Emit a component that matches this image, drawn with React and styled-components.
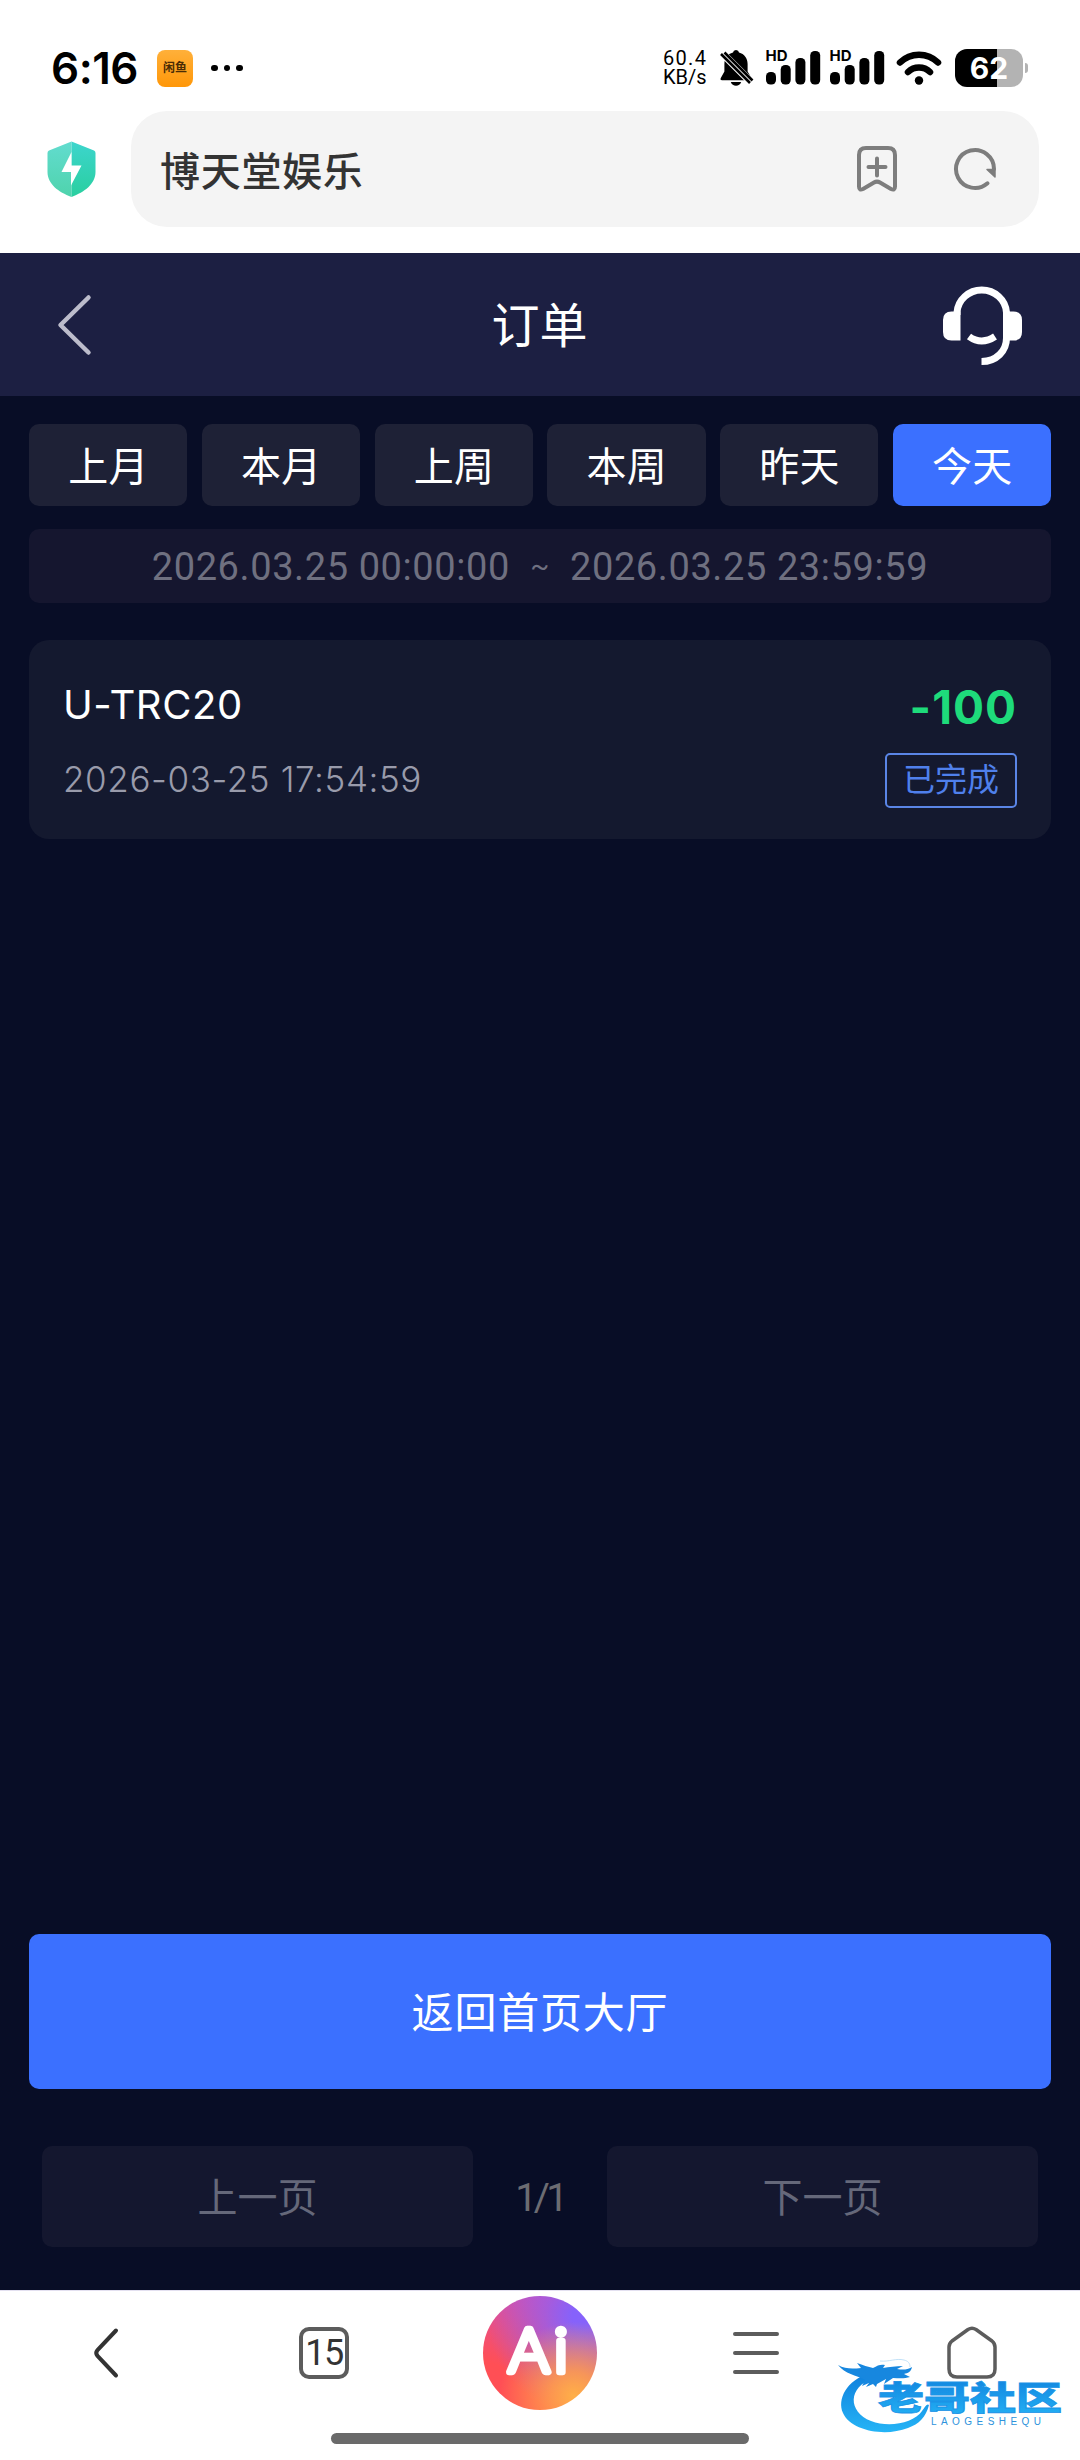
import React, { useState } from 'react';
import styled, { createGlobalStyle } from 'styled-components';

const latin = `Inter, "Noto Sans CJK SC", sans-serif`;
const plain = `Roboto, "Noto Sans CJK SC", sans-serif`;

const tabs = ['上月', '本月', '上周', '本周', '昨天', '今天'];

const orders = [
  { id: 1, name: 'U-TRC20', time: '2026-03-25 17:54:59', amount: '-100', status: '已完成' },
];

function BellOffIcon() {
  return <svg width="34" height="38" viewBox="0 0 34 38">
    <path d="M17 1a3 3 0 0 1 3 2.6c5.400 1.400 8.600 5.800 8.600 11.400v7.500l3.800 6.500c.6 1.300 0 2.300-1.300 2.300H3c-1.300 0-1.900-1-1.200-2.300l3.600-6.500V15c0-5.600 3.200-10 8.600-11.400A3 3 0 0 1 17 1z" />
    <path d="M11.800 33h10.400c-.9 2.500-2.800 3.700-5.200 3.700s-4.300-1.200-5.200-3.700z" />
    <path d="M2 3l31 31" stroke="#fff" strokeWidth="7.500" />
    <path d="M2 5l29 29M5.500 3.500l28 28" stroke="#000" strokeWidth="2.600" />
  </svg>;
}

function SignalIcon() {
  return <svg width="56" height="36" viewBox="0 0 56 36">
    <text x="-0.500" y="11" fontFamily="Inter, sans-serif" fontWeight="700" fontSize="14.500" textLength="22" lengthAdjust="spacingAndGlyphs">HD</text>
    <rect x="0" y="22" width="10" height="12.500" rx="4.500" />
    <rect x="14.700" y="15" width="10" height="19.500" rx="4.500" />
    <rect x="29.400" y="8" width="10" height="26.500" rx="4.500" />
    <rect x="44.200" y="1" width="10" height="33.500" rx="4.500" />
  </svg>;
}

function WifiIcon() {
  return <svg width="46" height="36" viewBox="0 0 46 36" fill="none" stroke="#000" strokeWidth="6.500" strokeLinecap="round">
    <path d="M4 12.500a27 27 0 0 1 38 0" />
    <path d="M12 22a16 16 0 0 1 22 0" />
    <circle cx="23" cy="30.500" r="4.200" fill="#000" stroke="none" />
  </svg>;
}

function ShieldIcon() {
  return <svg width="49" height="56" viewBox="0 0 49 56">
    <defs>
      <linearGradient id="shieldL" x1="0" y1="0" x2="0" y2="1">
        <stop offset="0" stopColor="#62dccf" />
        <stop offset="1" stopColor="#4fd3ac" />
      </linearGradient>
      <linearGradient id="shieldR" x1="0" y1="0" x2="0" y2="1">
        <stop offset="0" stopColor="#3dd5cd" />
        <stop offset="1" stopColor="#29cf9f" />
      </linearGradient>
    </defs>
    <path d="M24.500 0.500L2 9.500Q.5 10 .5 12v19c0 12 11 20 24 25z" fill="url(#shieldL)" />
    <path d="M24.500 0.500L47 9.500q1.500.5 1.500 2.500v19c0 12-11 20-24 25z" fill="url(#shieldR)" />
    <path d="M24.500 11L14.500 31h9.500v13.500L34.500 24.500h-10z" fill="#fff" />
  </svg>;
}

function BookmarkIcon() {
  return <svg width="42" height="48" viewBox="0 0 42 48" fill="none" stroke="#7d7d7d" strokeWidth="4" strokeLinecap="round" strokeLinejoin="round">
    <path d="M10 3h22q7 0 7 7v31.500q0 4.500-4 2.500l-11-6.500q-3-1.800-6 0L7 44q-4 2-4-2.500V10q0-7 7-7z" />
    <path d="M21 13.500v17M12.500 22h17" />
  </svg>;
}

function RefreshIcon() {
  return <svg width="44" height="44" viewBox="0 0 44 44" fill="none" stroke="#7d7d7d" strokeWidth="4" strokeLinecap="round">
    <path d="M41 22a19 19 0 1 0-6.500 14.300" />
    <path d="M34 22.500h8v7.500z" fill="#7d7d7d" strokeWidth="1.500" strokeLinejoin="round" />
  </svg>;
}

function ServiceIcon() {
  return <svg width="80" height="80" viewBox="0 0 80 80" fill="none" stroke="#fff" strokeWidth="7">
    <path d="M15 30v-2.500a24.800 24 0 0 1 49.500 0V53c0 13-10 23.500-25 23.500" />
    <path d="M18.500 26.500v29H9.500Q1 55.500 1 47V35q0-8.500 8.500-8.500zM61 26.500h10.500q8.500 0 8.500 8.500v12q0 8.500-8.500 8.500H61z" fill="#fff" stroke="none" />
    <path d="M27 51.500q12.500 9 26 0" />
  </svg>;
}

function WatermarkLogo() {
  return <svg width="230" height="86" viewBox="0 0 230 86">
    <defs>
      <linearGradient id="wave" x1="0" y1="0" x2="0" y2="1">
        <stop offset="0" stopColor="#0f7fdc" />
        <stop offset="1" stopColor="#25b4f6" />
      </linearGradient>
    </defs>
    <path d="M32 16C8 23-1 43 5 56c8 18 42 24 65 15 11-4 18-11 21-23-2-2-4 2-7 6-8 12-33 17-51 10C10 55 9 30 36 21z" fill="url(#wave)" />
    <path d="M0 8c7 4 14 4 23 3l-4-5c6 2 11 4 16 5 5-3 8-4 12-3l-2 3c6-1 13-2 20-2l-6 3c6 1 10 1 15-2-1 5-4 6-8 7l6 3c-6 2-12 1-17 1l-9 6 2-5-9 5-1 3-3-3-7 3 3-4-7 3 3-6C18 18 7 17 0 8z" fill="#1787df" />
    <path d="M42 4c9 1 16-3 24-1 4 1 6 3 6 7" fill="none" stroke="#b4d9f5" strokeWidth=".8" />
    <text x="40" y="53" fontFamily='"Noto Sans CJK SC", sans-serif' fontWeight="900" fontSize="33" textLength="184" lengthAdjust="spacingAndGlyphs" fill="url(#wave)" stroke="#1b93e6" strokeWidth=".8">老哥社区</text>
    <text x="93" y="67.500" fontFamily="Liberation Sans, sans-serif" fontSize="10" textLength="110" fill="#2d93dc">LAOGESHEQU</text>
  </svg>;
}

function App() {
  const [active, setActive] = useState(5);

  return <Page>
    <GlobalStyle />
    <StatusBar>
      <Clock>6:16</Clock>
      <AppBadge>闲鱼</AppBadge>
      <Dots><i /><i /><i /></Dots>
      <StatusRight>
        <NetSpeed><span>60.4</span><span>KB/s</span></NetSpeed>
        <BellOffIcon />
        <Signals><SignalIcon /><SignalIcon /></Signals>
        <WifiIcon />
        <Battery>62</Battery>
        <BatteryTip />
      </StatusRight>
    </StatusBar>

    <AddressRow>
      <ShieldIcon />
      <AddressBox>
        <SiteName>博天堂娱乐</SiteName>
        <BookmarkIcon />
        <RefreshIcon />
      </AddressBox>
    </AddressRow>

    <Header>
      <svg width="36" height="62" viewBox="0 0 36 62" fill="none" stroke="#bcbccb" strokeWidth="4.500" strokeLinecap="round" strokeLinejoin="round">
        <path d="M31.500 3.500L3.500 31l28 27.500" />
      </svg>
      <Title>订单</Title>
      <ServiceIcon />
    </Header>

    <Content>
      <Tabs>
        {tabs.map((tab, index) => (
          <Tab key={tab} $active={index === active} onClick={() => setActive(index)}>{tab}</Tab>
        ))}
      </Tabs>
      <DateRange>
        <span>2026.03.25 00:00:00</span>
        <em>~</em>
        <span>2026.03.25 23:59:59</span>
      </DateRange>

      {orders.map((order) => (
        <OrderCard key={order.id}>
          <OrderLine>
            <OrderName>{order.name}</OrderName>
            <Amount>{order.amount}</Amount>
          </OrderLine>
          <OrderLine>
            <OrderTime>{order.time}</OrderTime>
            <Status>{order.status}</Status>
          </OrderLine>
        </OrderCard>
      ))}

      <HomeButton>返回首页大厅</HomeButton>
      <Pager>
        <PageButton>上一页</PageButton>
        <PageCount>1/1</PageCount>
        <PageButton>下一页</PageButton>
      </Pager>
    </Content>

    <BottomBar>
      <NavItem>
        <svg width="32" height="52" viewBox="0 0 32 52" fill="none" stroke="#333" strokeWidth="4" strokeLinecap="round">
          <path d="M24 3.500L5.500 23q-2.500 3 0 6L24 48.500" />
        </svg>
      </NavItem>
      <NavItem><TabCount>15</TabCount></NavItem>
      <NavItem>
        <AiButton>
          <svg width="114" height="114" viewBox="0 0 114 114">
            <text x="25.500 71" y="75.500" fontFamily="Lato, sans-serif" fontWeight="300" fontSize="62" fill="#fff" stroke="#fff" strokeWidth="6.500" strokeLinejoin="round">Ai</text>
          </svg>
        </AiButton>
      </NavItem>
      <NavItem>
        <svg width="46" height="44" viewBox="0 0 46 44" stroke="#5c5c5c" strokeWidth="4" strokeLinecap="round">
          <path d="M2 3h42M2 22h42M2 41h42" />
        </svg>
      </NavItem>
      <NavItem>
        <svg width="50" height="54" viewBox="0 0 50 54" fill="none" stroke="#5c5c5c" strokeWidth="3.500" strokeLinejoin="round">
          <path d="M21 3.500q4-2.500 8 0L45 15q3 2.500 3 6v22q0 8-8 8H10q-8 0-8-8V21q0-3.500 3-6z" />
        </svg>
      </NavItem>
      <Watermark><WatermarkLogo /></Watermark>
    </BottomBar>
    <GestureArea><GestureBar /></GestureArea>
  </Page>;
}

export default App;

const GlobalStyle = createGlobalStyle`
  * {
    box-sizing: border-box;
  }
  body {
    margin: 0;
    background: #fff;
  }
  svg {
    display: block;
    flex-shrink: 0;
    overflow: visible;
  }
  button {
    border: none;
    padding: 0;
    margin: 0;
    cursor: pointer;
  }
`

const Page = styled.div`
  width: 1080px;
  height: 2460px;
  display: flex;
  flex-direction: column;
  background: #fff;
  font-family: ${plain};
`

const StatusBar = styled.div`
  display: flex;
  align-items: center;
  height: 111px;
  padding: 25px 52px 0 51px;
  color: #000;
`

const Clock = styled.div`
  width: 106px;
  font-family: ${latin};
  font-size: 44px;
  font-weight: 600;
  letter-spacing: -0.5px;
  white-space: nowrap;
`

const AppBadge = styled.div`
  width: 36px;
  height: 37px;
  border-radius: 8px;
  background: linear-gradient(#ffb03a, #ff9708);
  color: #4a2c05;
  font-size: 12px;
  font-weight: 700;
  line-height: 36px;
  text-align: center;
`

const Dots = styled.div`
  display: flex;
  gap: 6px;
  margin-left: 18px;
  i {
    width: 6.500px;
    height: 6.500px;
    border-radius: 50%;
    background: #000;
  }
`

const StatusRight = styled.div`
  display: flex;
  align-items: center;
  margin-left: auto;
`

const NetSpeed = styled.div`
  width: 56px;
  display: flex;
  flex-direction: column;
  font-family: ${plain};
  font-size: 20px;
  line-height: 19px;
  letter-spacing: 1.3px;
  span + span {
    letter-spacing: 0;
  }
`

const Signals = styled.div`
  display: flex;
  gap: 8px;
  margin: 0 10px 0 13px;
`

const Battery = styled.div`
  width: 68px;
  height: 38px;
  margin-left: 13px;
  border-radius: 12px;
  background: linear-gradient(90deg, #000 62%, #b3b3b3 62%);
  color: #fff;
  font-family: ${latin};
  font-size: 30px;
  font-weight: 700;
  line-height: 38px;
  text-align: center;
`

const BatteryTip = styled.div`
  width: 3px;
  height: 10px;
  margin-left: 2px;
  border-radius: 0 4px 4px 0;
  background: #b3b3b3;
`

const AddressRow = styled.div`
  display: flex;
  align-items: center;
  height: 142px;
  padding: 0 41px 26px 47px;
`

const AddressBox = styled.div`
  flex: 1;
  display: flex;
  align-items: center;
  gap: 55px;
  height: 116px;
  margin-left: 35px;
  padding: 0 42px 0 29px;
  border-radius: 36px;
  background: #f4f4f4;
`

const SiteName = styled.div`
  flex: 1;
  padding-bottom: 1px;
  color: #333;
  font-size: 40px;
  font-weight: 500;
  letter-spacing: 0.7px;
`

const Header = styled.header`
  display: flex;
  align-items: center;
  height: 143px;
  padding: 0 58px 0 57px;
  background: #1c1f42;
`

const Title = styled.h1`
  flex: 1;
  margin: 0 -44px 0 0;
  padding: 0 0 6px;
  color: #fff;
  font-size: 48px;
  font-weight: 400;
  text-align: center;
`

const Content = styled.main`
  flex: 1;
  display: flex;
  flex-direction: column;
  padding: 28px 29px 43px;
  background: #080d26;
`

const Tabs = styled.div`
  display: grid;
  grid-template-columns: repeat(6, 1fr);
  gap: 14.500px;
`

const Tab = styled.button`
  height: 82px;
  padding: 0 0 2px 1px;
  border-radius: 10px;
  background: ${(props) => (props.$active ? '#3b70ff' : '#1e2136')};
  color: #fff;
  font-family: ${plain};
  font-size: 40px;
  letter-spacing: 0.5px;
`

const DateRange = styled.div`
  display: flex;
  align-items: center;
  justify-content: center;
  height: 74px;
  margin-top: 23px;
  padding-top: 2px;
  border-radius: 10px;
  background: #15162f;
  color: #6f7080;
  font-size: 38px;
  letter-spacing: 0.6px;
  white-space: nowrap;
  em {
    width: 60px;
    padding-bottom: 4px;
    font-style: normal;
    font-size: 28px;
    text-align: center;
  }
`

const OrderCard = styled.div`
  display: flex;
  flex-direction: column;
  height: 199px;
  margin-top: 37px;
  padding: 32px 34px 0 34px;
  border-radius: 20px;
  background: #14192f;
`

const OrderLine = styled.div`
  display: flex;
  align-items: center;
  justify-content: space-between;
  height: 70px;
`

const OrderName = styled.div`
  padding-bottom: 5px;
  color: #fff;
  font-family: ${latin};
  font-size: 40px;
  letter-spacing: 0.6px;
`

const Amount = styled.div`
  color: #1edb7b;
  font-family: ${latin};
  font-size: 46px;
  font-weight: 700;
  letter-spacing: 1px;
`

const OrderTime = styled.div`
  padding-top: 3px;
  color: #999bab;
  font-family: ${latin};
  font-size: 35px;
  font-weight: 300;
  letter-spacing: 0.6px;
`

const Status = styled.div`
  width: 132px;
  height: 55px;
  margin-top: 7px;
  border: 2px solid #5a85e6;
  border-radius: 5px;
  color: #4f80ec;
  font-size: 32px;
  line-height: 50px;
  text-align: center;
`

const HomeButton = styled.button`
  height: 155px;
  margin-top: auto;
  padding: 0 0 4px;
  border-radius: 10px;
  background: #3b70ff;
  color: #fff;
  font-family: ${plain};
  font-size: 42px;
  letter-spacing: 0.8px;
`

const Pager = styled.div`
  display: flex;
  align-items: center;
  margin-top: 57px;
  padding: 0 13px;
`

const PageButton = styled.button`
  flex: 1;
  height: 101px;
  padding: 0 0 4px;
  border-radius: 10px;
  background: #14172f;
  color: #65687a;
  font-family: ${plain};
  font-size: 40px;
`

const PageCount = styled.div`
  width: 134px;
  padding-top: 2px;
  color: #6c6c72;
  font-size: 39px;
  letter-spacing: -3.5px;
  text-align: center;
`

const BottomBar = styled.nav`
  position: relative;
  display: grid;
  grid-template-columns: repeat(5, 1fr);
  height: 126px;
  padding-bottom: 2px;
  border-top: 1px solid #e3e0f0;
`

const NavItem = styled.div`
  display: flex;
  align-items: center;
  justify-content: center;
`

const TabCount = styled.div`
  width: 50px;
  height: 52px;
  border: 4px solid #5c5c5c;
  border-radius: 10px;
  color: #333;
  font-size: 36px;
  line-height: 45px;
  letter-spacing: -1.5px;
  text-align: center;
`

const AiButton = styled.div`
  width: 114px;
  height: 114px;
  border-radius: 50%;
  background:
    radial-gradient(circle at 80% 88%, #ffb048 0%, rgba(255, 160, 75, .85) 18%, rgba(255, 130, 80, 0) 55%),
    radial-gradient(circle at 88% 18%, #8662fb 8%, rgba(150, 95, 235, .75) 28%, rgba(220, 75, 160, 0) 70%),
    linear-gradient(200deg, #d84fae 15%, #ff4f55 68%);
`

const Watermark = styled.div`
  position: absolute;
  left: 838px;
  top: 66px;
`

const GestureArea = styled.div`
  display: flex;
  justify-content: center;
  height: 44px;
  padding-top: 17px;
`

const GestureBar = styled.div`
  width: 418px;
  height: 11px;
  border-radius: 6px;
  background: #6a6a6a;
`
